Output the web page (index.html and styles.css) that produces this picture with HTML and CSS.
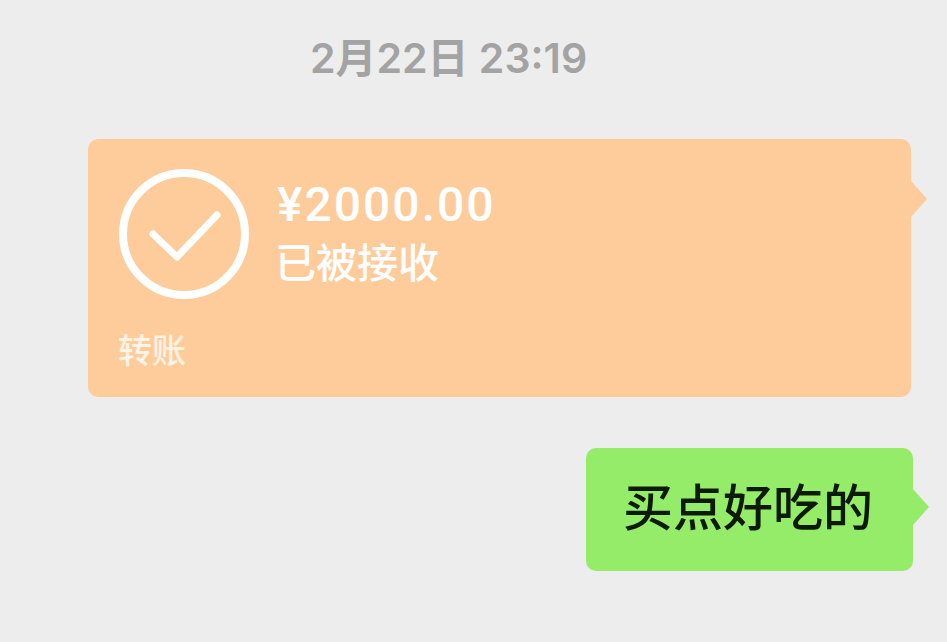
FILE: index.html
```html
<!DOCTYPE html>
<html lang="zh-CN">
<head>
    <meta charset="UTF-8">
    <meta name="viewport" content="width=device-width, initial-scale=1.0">
    <title>聊天记录</title>
    <link rel="stylesheet" href="styles.css">
</head>
<body>
    <div class="time">2月22日 23:19</div>

    <div class="row row-transfer">
        <div class="bubble transfer">
            <div class="transfer-main">
                <svg class="check" width="130" height="130" viewBox="0 0 130 130">
                    <circle cx="65" cy="65" r="61" fill="none" stroke="#fff" stroke-width="8"/>
                    <path d="M34 65 L58 88 L98 46" fill="none" stroke="#fff" stroke-width="7" stroke-linecap="round" stroke-linejoin="round"/>
                </svg>
                <div class="transfer-text">
                    <div class="amount">¥2000.00</div>
                    <div class="status">已被接收</div>
                </div>
            </div>
            <div class="transfer-label">转账</div>
        </div>
    </div>

    <div class="row row-text">
        <div class="bubble text">买点好吃的</div>
    </div>
</body>
</html>
```

FILE: styles.css
```css
body {
    margin: 0;
    height: 642px;
    overflow: hidden;
    background-color: #ededed;
    font-family: "Noto Sans CJK SC", sans-serif;
}
.time {
    height: 139px;
    box-sizing: border-box;
    padding-top: 33px;
    padding-right: 50px;
    text-align: center;
    font-family: Inter, "Noto Sans CJK SC", sans-serif;
    font-size: 41px;
    line-height: 50px;
    font-weight: 600;
    color: #a3a3a3;
}
.row {
    display: flex;
    justify-content: flex-end;
}
.row-transfer {
    padding-right: 36px;
}
.row-text {
    margin-top: 51px;
    padding-right: 34px;
}
.bubble {
    position: relative;
    box-sizing: border-box;
    border-radius: 10px;
}
/* little arrow on the right side of a bubble */
.bubble::after {
    content: "";
    position: absolute;
    right: -16px;
    top: 42px;
    width: 16px;
    height: 36px;
    clip-path: polygon(0 0, 100% 50%, 0 100%);
}
.transfer {
    width: 823px;
    height: 258px;
    padding: 31px 31px 0;
    background-color: #fecc9b;
    color: #fff;
}
.transfer::after {
    background-color: #fecc9b;
}
.transfer-main {
    display: flex;
    gap: 28px;
}
.check {
    display: block;
    flex-shrink: 0;
    margin: -1px 0 0 0;
}
.transfer-text {
    padding-top: 7px;
}
.amount {
    font-family: Roboto, "Noto Sans CJK SC", sans-serif;
    font-size: 48px;
    line-height: 56px;
    font-weight: 500;
    letter-spacing: 2px;
}
.status {
    margin-left: -2px;
    margin-top: 2px;
    font-size: 41px;
    line-height: 50px;
    font-weight: 500;
}
.transfer-label {
    margin-top: 27px;
    margin-left: -1px;
    font-size: 34px;
    line-height: 46px;
    font-weight: 500;
    color: #fff3e6;
}
.text {
    width: 327px;
    height: 123px;
    padding-left: 37px;
    background-color: #95ec69;
    font-size: 50px;
    line-height: 113px;
    font-weight: 500;
    color: #0c1a06;
}
.text::after {
    top: 41px;
    background-color: #95ec69;
}
```
